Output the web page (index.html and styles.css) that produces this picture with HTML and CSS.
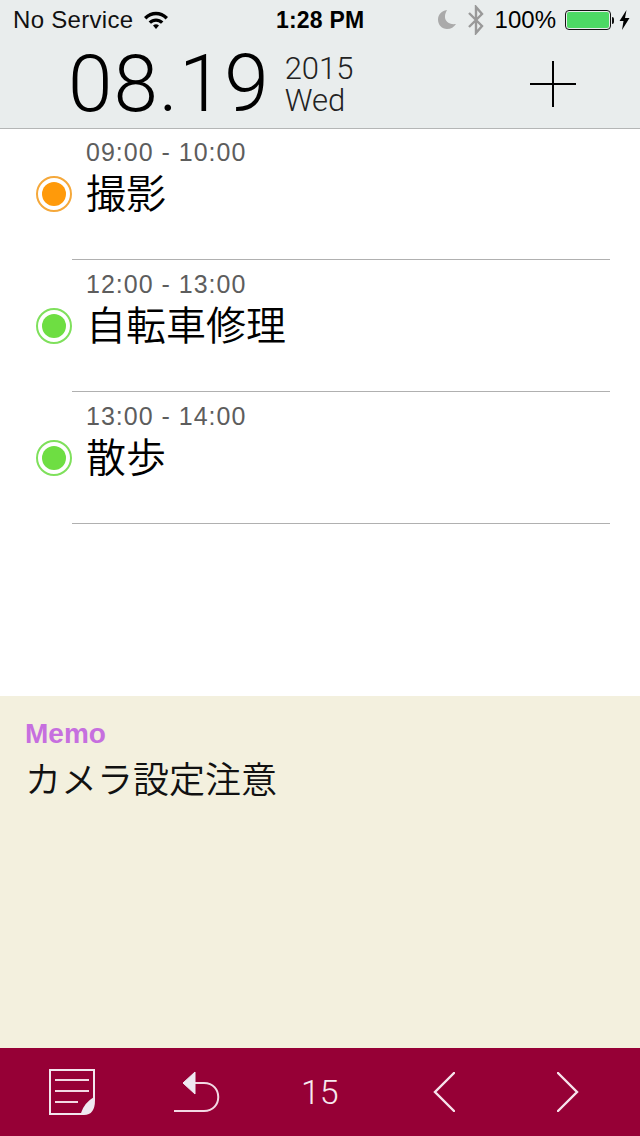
FILE: index.html
```html
<!DOCTYPE html>
<html lang="ja">
<head>
    <meta charset="UTF-8">
    <meta name="viewport" content="width=device-width, initial-scale=1.0">
    <title>Schedule</title>
    <link rel="stylesheet" href="styles.css">
</head>
<body>
    <div class="app">
        <header class="header">
            <div class="status-bar">
                <div class="status-left">
                    <span>No Service</span>
                    <svg class="wifi" width="26" height="20" viewBox="0 0 26 20">
                        <path d="M1 7 C8 0 18 0 25 7 L22.600 9.400 C17 4 9 4 3.400 9.400 Z" fill="#000"/>
                        <path d="M5.600 11.400 C10 7.400 16 7.400 20.400 11.400 L18 13.800 C15 11 11 11 8 13.800 Z" fill="#000"/>
                        <path d="M10 15.400 C12 14 14 14 16 15.400 L13 19 Z" fill="#000"/>
                    </svg>
                </div>
                <div class="status-time">1:28 PM</div>
                <div class="status-right">
                    <svg width="20" height="22" viewBox="0 0 20 22">
                        <path d="M10 1 C4 2 1 6 1 10.500 C1 16 5 20 10 20 C14 20 17 18 19 15 C12 16 7.500 12 8 7 C8 5 9 3 10 1 Z" fill="#aaa"/>
                    </svg>
                    <svg class="bt" width="18" height="30" viewBox="0 0 18 30">
                        <path d="M2 8 L15 21 L9 28 L9 2 L15 9 L2 22" fill="none" stroke="#999" stroke-width="2.400"/>
                    </svg>
                    <span class="battery-text">100%</span>
                    <div class="battery"><div class="battery-fill"></div></div>
                    <div class="battery-tip"></div>
                    <svg class="bolt" width="11" height="20" viewBox="0 0 11 20">
                        <path d="M7.500 0 L0.500 11 L4.500 11 L3 20 L10.500 8 L6 8 Z" fill="#000"/>
                    </svg>
                </div>
            </div>
            <div class="date-bar">
                <div class="date-main">08.19</div>
                <div class="date-side">
                    <div>2015</div>
                    <div>Wed</div>
                </div>
                <svg class="add" width="46" height="46" viewBox="0 0 46 46">
                    <path d="M23 0 V46 M0 23 H46" stroke="#000" stroke-width="2"/>
                </svg>
            </div>
        </header>

        <main class="list">
            <div class="item">
                <div class="time">09:00 - 10:00</div>
                <div class="item-row">
                    <div class="dot orange"><span></span></div>
                    <div class="title">撮影</div>
                </div>
            </div>
            <div class="item">
                <div class="time">12:00 - 13:00</div>
                <div class="item-row">
                    <div class="dot green"><span></span></div>
                    <div class="title">自転車修理</div>
                </div>
            </div>
            <div class="item">
                <div class="time">13:00 - 14:00</div>
                <div class="item-row">
                    <div class="dot green"><span></span></div>
                    <div class="title">散歩</div>
                </div>
            </div>
        </main>

        <section class="memo">
            <div class="memo-label">Memo</div>
            <div class="memo-text">カメラ設定注意</div>
        </section>

        <footer class="toolbar">
            <svg class="tool-note" width="48" height="48" viewBox="0 0 48 48">
                <path d="M2 2 H46 V32 Q46 46 36 46 H2 Z" fill="none" stroke="#f3e6ee" stroke-width="2"/>
                <path d="M7 12 H41 M7 23 H41 M7 34 H30" stroke="#f3d9e4" stroke-width="2"/>
                <path d="M33 45 Q36 35 46 29 L46 33 Q45 46 36 46 Z" fill="#efe9f2"/>
            </svg>
            <svg class="tool-back" width="46" height="44" viewBox="0 0 46 44">
                <path d="M0 41 H30 C49 41 49 13 30 13 H21" fill="none" stroke="#f3d9e4" stroke-width="2"/>
                <path d="M9 13 L21 2 L21 24 Z" fill="#efe9f2" stroke="#efe9f2" stroke-linejoin="round" stroke-width="1"/>
            </svg>
            <div class="tool-num">15</div>
            <svg class="tool-prev" width="22" height="40" viewBox="0 0 22 40">
                <path d="M21 1 L2 20 L21 39" fill="none" stroke="#f7e3ec" stroke-width="2.400" stroke-linecap="round"/>
            </svg>
            <svg class="tool-next" width="22" height="40" viewBox="0 0 22 40">
                <path d="M1 1 L20 20 L1 39" fill="none" stroke="#f7e3ec" stroke-width="2.400" stroke-linecap="round"/>
            </svg>
        </footer>
    </div>
</body>
</html>
```

FILE: styles.css
```css
* {
    box-sizing: border-box;
}
html, body {
    margin: 0;
    padding: 0;
}
body {
    font-family: "Liberation Sans", "Noto Sans CJK JP", sans-serif;
    background: #fff;
    color: #000;
}
.app {
    width: 640px;
    height: 1136px;
    display: flex;
    flex-direction: column;
    overflow: hidden;
}
.header {
    height: 129px;
    background: #e9eded;
    border-bottom: 1px solid #b4b6b6;
}
.status-bar {
    height: 40px;
    display: flex;
    align-items: center;
    justify-content: space-between;
    padding: 0 10px 0 13px;
    font-size: 24px;
    position: relative;
}
.status-left {
    display: flex;
    align-items: center;
    gap: 10px;
    letter-spacing: 0.3px;
    color: #111;
}
.status-time {
    position: absolute;
    left: 276px;
    font-weight: bold;
    font-size: 23px;
    letter-spacing: 0.2px;
}
.status-right {
    display: flex;
    align-items: center;
    font-size: 24px;
}
.bt {
    margin-left: 10px;
}
.battery-text {
    margin-left: 10px;
}
.battery {
    width: 46px;
    height: 20px;
    margin-left: 9px;
    border: 1.500px solid #111;
    border-radius: 4px;
    padding: 1px;
}
.battery-fill {
    height: 100%;
    background: #4cd964;
    border-radius: 2px;
}
.battery-tip {
    width: 2px;
    height: 7px;
    margin-left: 1px;
    background: #111;
    border-radius: 0 2px 2px 0;
}
.bolt {
    margin-left: 5px;
}
.date-bar {
    height: 88px;
    display: flex;
    align-items: center;
    padding: 0 64px 0 68px;
}
.date-main {
    font-family: "Roboto", sans-serif;
    font-weight: 300;
    font-size: 80px;
    line-height: 88px;
    letter-spacing: 1px;
}
.date-side {
    margin: 2px 0 0 15px;
    font-family: "Roboto", sans-serif;
    font-weight: 300;
    font-size: 31px;
    line-height: 32px;
    color: #222;
}
.add {
    margin-left: auto;
}
.list {
    height: 567px;
}
.item {
    height: 132px;
    padding: 8px 30px 0 36px;
    position: relative;
}
.item::after {
    content: "";
    position: absolute;
    left: 72px;
    right: 30px;
    bottom: 1px;
    border-bottom: 1px solid #b0b0b0;
}
.time {
    margin-left: 50px;
    font-size: 25px;
    line-height: 30px;
    letter-spacing: 1px;
    color: #5d5d5d;
}
.item-row {
    display: flex;
    align-items: center;
    gap: 14px;
    height: 54px;
}
.title {
    font-size: 40px;
    line-height: 54px;
    font-weight: 350;
}
.dot {
    width: 36px;
    height: 36px;
    border-radius: 50%;
    border: 2px solid;
    display: flex;
    align-items: center;
    justify-content: center;
}
.dot span {
    width: 24px;
    height: 24px;
    border-radius: 50%;
}
.dot.orange {
    border-color: #f5a83a;
}
.dot.orange span {
    background: #ff9a0a;
}
.dot.green {
    border-color: #7fe05c;
}
.dot.green span {
    background: #6ede42;
}
.memo {
    height: 352px;
    background: #f3f0de;
    padding: 22px 25px 0;
}
.memo-label {
    font-size: 28px;
    line-height: 32px;
    font-weight: bold;
    color: #c66fdf;
}
.memo-text {
    font-size: 36px;
    line-height: 52px;
    margin-top: 5px;
    font-weight: 350;
    color: #111;
}
.toolbar {
    height: 88px;
    background: #960036;
    display: flex;
    align-items: center;
    padding-left: 48px;
}
.tool-back {
    margin-left: 78px;
}
.tool-num {
    margin-left: 81px;
    color: #f7e9ef;
    font-family: "Roboto", sans-serif;
    font-weight: 300;
    font-size: 34px;
}
.tool-prev {
    margin-left: 94px;
}
.tool-next {
    margin-left: 102px;
}
```
